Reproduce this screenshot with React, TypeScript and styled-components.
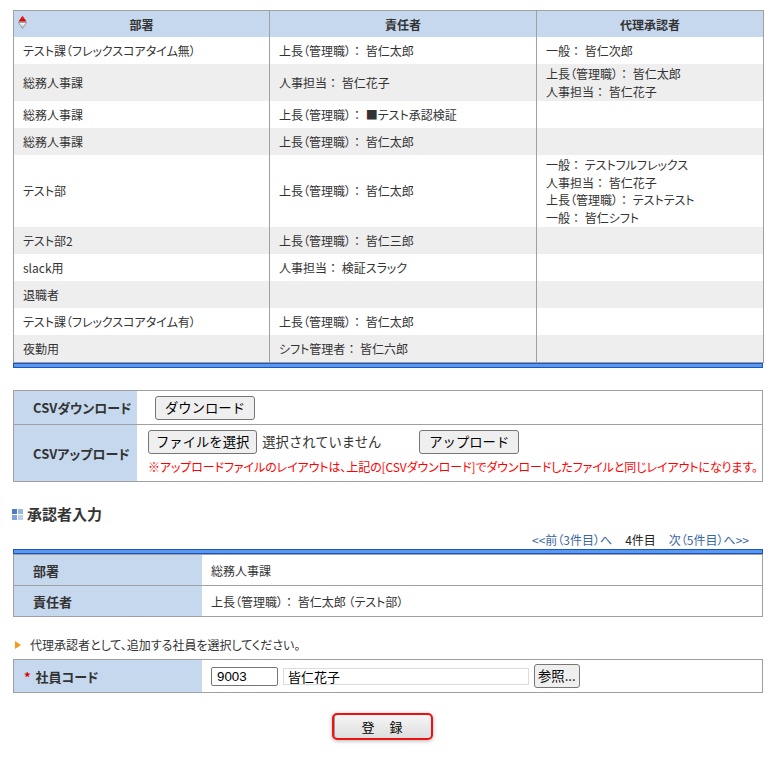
import React from "react";
import styled, { createGlobalStyle } from "styled-components";

const GlobalStyle = createGlobalStyle`
  html, body { margin: 0; padding: 0; background: #fff; }
  body {
    font-family: "Noto Sans CJK JP", "Noto Sans", sans-serif;
    font-size: 12px;
    color: #333;
  }
`;

const BORDER = "#a0a0a0";
const HEAD_BG = "#c6d8ee";
const ALT_BG = "#eeeeee";
const UI_FONT = `"Noto Sans CJK JP", "Noto Sans", sans-serif`;

const Page = styled.div`
  width: 750px;
  padding: 10px 0 20px 13px;
  font-feature-settings: "palt";
`;

/* ---------- list table ---------- */
const ListTable = styled.table`
  width: 750px;
  border-collapse: collapse;
  table-layout: fixed;
  border: 1px solid ${BORDER};
`;

const HeadCell = styled.th`
  position: relative;
  height: 26px;
  padding: 0;
  background: ${HEAD_BG};
  font-size: 12px;
  font-weight: bold;
  color: #333;
  text-align: center;
  border-left: 1px solid ${BORDER};
`;

const SortIcon = styled.svg`
  position: absolute;
  left: 4px;
  top: 4px;
`;

const Row = styled.tr<{ $alt: boolean }>`
  background: ${(p) => (p.$alt ? ALT_BG : "#fff")};
`;

const Cell = styled.td`
  height: 25px;
  padding: 1px 9px;
  line-height: 17.5px;
  vertical-align: middle;
  border-left: 1px solid ${BORDER};
  color: #333;
`;

const Line = styled.div`
  white-space: nowrap;
`;

const Colon = styled.span`
  font-feature-settings: normal;
`;

const BlueBar = styled.div`
  height: 3px;
  width: 748px;
  border: 1px solid #1a55c2;
  background: #5b99ee;
`;

/* ---------- form tables ---------- */
const FormTable = styled.table<{ $mt?: number }>`
  width: 750px;
  border-collapse: collapse;
  table-layout: fixed;
  border: 1px solid ${BORDER};
  margin-top: ${(p) => p.$mt ?? 0}px;
`;

const FormRow = styled.tr`
  & + & > * {
    border-top: 1px solid ${BORDER};
  }
`;

const Label = styled.th<{ $w: number; $pl?: number }>`
  width: ${(p) => p.$w - (p.$pl ?? 19)}px;
  background: ${HEAD_BG};
  text-align: left;
  padding: 0 0 0 ${(p) => p.$pl ?? 19}px;
  font-size: 13px;
  font-weight: bold;
  color: #333;
  white-space: nowrap;
`;

const Value = styled.td<{ $h?: number; $pad?: string }>`
  height: ${(p) => p.$h ?? 30}px;
  padding: ${(p) => p.$pad ?? "0 9px"};
  font-size: 12px;
  color: #333;
  vertical-align: middle;
`;

const Required = styled.span`
  color: #e00000;
  margin-right: 5px;
`;

const NativeButton = styled.button<{ $px?: number }>`
  font-family: ${UI_FONT};
  font-feature-settings: normal;
  font-size: 13.33px;
  height: 24px;
  line-height: 20px;
  padding: 0 ${(p) => p.$px ?? 9}px;
  background: #efefef;
  border: 1px solid #767676;
  border-radius: 3px;
  color: #000;
  cursor: pointer;
`;

const InlineRow = styled.div<{ $gap?: number }>`
  display: flex;
  align-items: center;
  gap: ${(p) => p.$gap ?? 5}px;
`;

const NoFile = styled.span`
  font-size: 13.33px;
  font-feature-settings: normal;
  color: #333;
  width: 152px;
`;

const Note = styled.div`
  margin-top: 5px;
  color: #ff0000;
  font-size: 12px;
  line-height: 16px;
  white-space: nowrap;
  letter-spacing: -0.1px;
`;

/* ---------- section heading ---------- */
const Heading = styled.h2`
  display: flex;
  align-items: center;
  gap: 4px;
  margin: 22px 0 0 -1px;
  font-size: 15px;
  font-weight: bold;
  color: #333;
  line-height: 20px;
`;

const HeadIcon = styled.span`
  display: grid;
  grid-template-columns: 5px 5px;
  grid-template-rows: 5px 5px;
  gap: 1px;
`;

const Sq = styled.span<{ $c: string }>`
  background: ${(p) => p.$c};
`;

const Pager = styled.div`
  display: flex;
  justify-content: flex-end;
  gap: 13px;
  padding-right: 14px;
  margin-top: 8px;
  margin-bottom: 1px;
  line-height: 16px;
  font-size: 12px;
`;

const PagerLink = styled.a`
  color: #3b679f;
  text-decoration: none;
`;

const PagerCurrent = styled.span`
  color: #222;
`;

const Instruction = styled.p`
  display: flex;
  align-items: center;
  gap: 9px;
  margin: 20px 0 0 2px;
  line-height: 16px;
  font-size: 12px;
  color: #333;
`;

const Arrow = styled.span`
  width: 0;
  height: 0;
  border-top: 4.5px solid transparent;
  border-bottom: 4.5px solid transparent;
  border-left: 6px solid #f29b18;
`;

const CodeInput = styled.input`
  box-sizing: border-box;
  width: 67px;
  height: 19px;
  border: 1px solid #767676;
  border-radius: 2px;
  padding: 0 5px;
  font-family: "Liberation Sans", Arial, sans-serif;
  font-size: 13.33px;
  color: #000;
`;

const NameInput = styled.input`
  box-sizing: border-box;
  width: 246px;
  height: 17px;
  border: 1px solid #dcdcdc;
  padding: 0 4px;
  font-family: ${UI_FONT};
  font-size: 13px;
  color: #000;
  background: #fff;
`;

const SubmitRow = styled.div`
  display: flex;
  justify-content: center;
  padding-right: 11px;
  margin-top: 20px;
`;

const SubmitButton = styled.button`
  width: 101px;
  height: 27px;
  border: 2px solid #ee1111;
  border-radius: 5px;
  background: linear-gradient(#f6f6f6, #dedede);
  box-shadow: 0 1px 4px rgba(0, 0, 0, 0.3), inset 1px 0 0 #9a9a9a;
  font-family: ${UI_FONT};
  font-size: 13px;
  color: #000;
  letter-spacing: 1px;
  cursor: pointer;
`;

type Entry = { role: string; name: string };
type Rec = { dept: string; resp?: Entry; proxies: Entry[] };

const rows: Rec[] = [
  { dept: "テスト課（フレックスコアタイム無）", resp: { role: "上長（管理職）", name: "皆仁太郎" }, proxies: [{ role: "一般", name: "皆仁次郎" }] },
  {
    dept: "総務人事課",
    resp: { role: "人事担当", name: "皆仁花子" },
    proxies: [
      { role: "上長（管理職）", name: "皆仁太郎" },
      { role: "人事担当", name: "皆仁花子" },
    ],
  },
  { dept: "総務人事課", resp: { role: "上長（管理職）", name: "■テスト承認検証" }, proxies: [] },
  { dept: "総務人事課", resp: { role: "上長（管理職）", name: "皆仁太郎" }, proxies: [] },
  {
    dept: "テスト部",
    resp: { role: "上長（管理職）", name: "皆仁太郎" },
    proxies: [
      { role: "一般", name: "テストフルフレックス" },
      { role: "人事担当", name: "皆仁花子" },
      { role: "上長（管理職）", name: "テストテスト" },
      { role: "一般", name: "皆仁シフト" },
    ],
  },
  { dept: "テスト部2", resp: { role: "上長（管理職）", name: "皆仁三郎" }, proxies: [] },
  { dept: "slack用", resp: { role: "人事担当", name: "検証スラック" }, proxies: [] },
  { dept: "退職者", proxies: [] },
  { dept: "テスト課（フレックスコアタイム有）", resp: { role: "上長（管理職）", name: "皆仁太郎" }, proxies: [] },
  { dept: "夜勤用", resp: { role: "シフト管理者", name: "皆仁六郎" }, proxies: [] },
];

function Person({ e }: { e: Entry }) {
  return (
    <>
      {e.role}
      <Colon>：</Colon> {e.name}
    </>
  );
}

export default function App() {
  return (
    <>
      <GlobalStyle />
      <Page>
        <ListTable>
          <colgroup>
            <col style={{ width: 256 }} />
            <col style={{ width: 267 }} />
            <col style={{ width: 227 }} />
          </colgroup>
          <thead>
            <tr>
              <HeadCell>
                <SortIcon width="9" height="14" viewBox="0 0 9 14">
                  <defs>
                    <linearGradient id="up" x1="0" y1="0" x2="0" y2="1">
                      <stop offset="0" stopColor="#ff3030" />
                      <stop offset="1" stopColor="#c80000" />
                    </linearGradient>
                    <linearGradient id="down" x1="0" y1="0" x2="0" y2="1">
                      <stop offset="0" stopColor="#ffffff" />
                      <stop offset="1" stopColor="#b8b8b8" />
                    </linearGradient>
                  </defs>
                  <polygon points="4.5,0.5 8.5,6.5 0.5,6.5" fill="url(#up)" />
                  <polygon points="0.5,7.5 8.5,7.5 4.5,13.5" fill="url(#down)" stroke="#8a8a8a" strokeWidth="0.8" />
                </SortIcon>
                部署
              </HeadCell>
              <HeadCell>責任者</HeadCell>
              <HeadCell>代理承認者</HeadCell>
            </tr>
          </thead>
          <tbody>
            {rows.map((r, i) => (
              <Row key={i} $alt={i % 2 === 1}>
                <Cell>{r.dept}</Cell>
                <Cell>{r.resp && <Person e={r.resp} />}</Cell>
                <Cell>
                  {r.proxies.map((p, j) => (
                    <Line key={j}>
                      <Person e={p} />
                    </Line>
                  ))}
                </Cell>
              </Row>
            ))}
          </tbody>
        </ListTable>
        <BlueBar />

        <FormTable $mt={22}>
          <tbody>
            <FormRow>
              <Label $w={123}>CSVダウンロード</Label>
              <Value $h={24} $pad="5px 18px 4px 18px">
                <NativeButton>ダウンロード</NativeButton>
              </Value>
            </FormRow>
            <FormRow>
              <Label $w={123}>CSVアップロード</Label>
              <Value $h={46} $pad="4px 11px 6px 11px">
                <InlineRow>
                  <NativeButton $px={7}>ファイルを選択</NativeButton>
                  <NoFile>選択されていません</NoFile>
                  <NativeButton>アップロード</NativeButton>
                </InlineRow>
                <Note>
                  ※アップロードファイルのレイアウトは、上記の[CSVダウンロード]でダウンロードしたファイルと同じレイアウトになります。
                </Note>
              </Value>
            </FormRow>
          </tbody>
        </FormTable>

        <Heading>
          <HeadIcon>
            <Sq $c="#4a7dc2" />
            <Sq $c="#98b7df" />
            <Sq $c="#7fa4d6" />
            <Sq $c="#bdd0ea" />
          </HeadIcon>
          承認者入力
        </Heading>

        <Pager>
          <PagerLink href="#">&lt;&lt;前（3件目）へ</PagerLink>
          <PagerCurrent>4件目</PagerCurrent>
          <PagerLink href="#">次（5件目）へ&gt;&gt;</PagerLink>
        </Pager>
        <BlueBar />

        <FormTable>
          <tbody>
            <FormRow>
              <Label $w={188}>部署</Label>
              <Value>総務人事課</Value>
            </FormRow>
            <FormRow>
              <Label $w={188}>責任者</Label>
              <Value>
                <Person e={{ role: "上長（管理職）", name: "皆仁太郎" }} /> （テスト部）
              </Value>
            </FormRow>
          </tbody>
        </FormTable>

        <Instruction>
          <Arrow />
          代理承認者として、追加する社員を選択してください。
        </Instruction>

        <FormTable $mt={6}>
          <tbody>
            <FormRow>
              <Label $w={188} $pl={10}>
                <Required>*</Required>社員コード
              </Label>
              <Value $h={32}>
                <InlineRow>
                  <CodeInput defaultValue="9003" />
                  <NameInput readOnly defaultValue="皆仁花子" />
                  <NativeButton $px={3}>参照...</NativeButton>
                </InlineRow>
              </Value>
            </FormRow>
          </tbody>
        </FormTable>

        <SubmitRow>
          <SubmitButton>登　録</SubmitButton>
        </SubmitRow>
      </Page>
    </>
  );
}
